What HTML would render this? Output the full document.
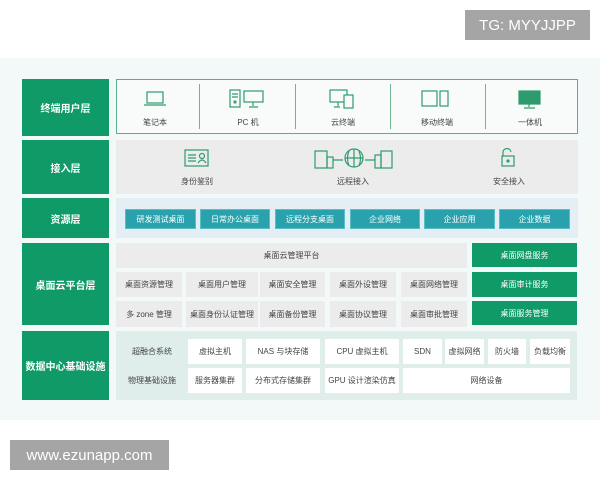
<!DOCTYPE html>
<html><head><meta charset="utf-8"><style>
*{margin:0;padding:0;box-sizing:border-box}
body{width:600px;height:480px;background:#fff;position:relative;overflow:hidden;font-family:"Liberation Sans","Noto Sans CJK SC",sans-serif;color:#444}
.a{position:absolute}
.lab{position:absolute;left:22px;width:87px;background:#0f9a68;color:#fff;font-size:10px;font-weight:bold;display:flex;align-items:center;justify-content:center}
.c{position:absolute;display:flex;align-items:center;justify-content:center;font-size:8px;color:#444}
.g{background:#ececec}
.gr{background:#0f9a68;color:#fff}
.t{background:#2aa2ad;color:#fff;border:1px solid #5bbec6}
.w{background:#fff}
.txt{position:absolute;font-size:8px;color:#444;text-align:center}
svg{position:absolute;fill:none;stroke:#2e9b6e;stroke-width:1.2}
</style></head><body>
<div class="a" style="left:465px;top:10px;width:125px;height:30px;background:#a5a5a5;color:#fff;font-size:15px;display:flex;align-items:center;justify-content:center">TG: MYYJJPP</div>
<div class="a" style="left:0;top:58px;width:600px;height:362px;background:#f3f8f8"></div>

<div class="lab" style="top:79px;height:57px">终端用户层</div>
<div class="a" style="left:116px;top:79px;width:462px;height:55px;border:1px solid #5aae8a;background:#f8fbfa"></div>
<div class="a" style="left:199px;top:84px;width:1px;height:45px;background:#6fb594"></div>
<div class="a" style="left:295px;top:84px;width:1px;height:45px;background:#6fb594"></div>
<div class="a" style="left:390px;top:84px;width:1px;height:45px;background:#6fb594"></div>
<div class="a" style="left:485px;top:84px;width:1px;height:45px;background:#6fb594"></div>
<svg style="left:143px;top:90px" width="24" height="18"><rect x="4" y="2" width="16" height="11"/><path d="M1 15h22"/></svg>
<div class="txt" style="left:125px;top:117px;width:60px">笔记本</div>
<svg style="left:229px;top:88px" width="40" height="22"><rect x="1" y="2" width="10" height="17"/><path d="M3 6h6M3 9h6"/><circle cx="6" cy="14" r="1"/><rect x="15" y="3" width="19" height="11"/><path d="M24 14v4M20 19h9"/></svg>
<div class="txt" style="left:218px;top:117px;width:60px">PC 机</div>
<svg style="left:329px;top:88px" width="30" height="22"><rect x="1" y="2" width="17" height="12"/><path d="M9 14v4M5 19h6"/><rect x="15" y="7" width="9" height="13" fill="#f8fbfa"/></svg>
<div class="txt" style="left:313px;top:117px;width:60px">云终端</div>
<svg style="left:420px;top:88px" width="30" height="22"><rect x="2" y="3" width="15" height="15"/><rect x="20" y="3" width="8" height="15"/></svg>
<div class="txt" style="left:407px;top:117px;width:60px">移动终端</div>
<svg style="left:517px;top:88px" width="26" height="22"><rect x="2" y="3" width="21" height="13" fill="#2e9b6e"/><path d="M12 16v3M7 20h11"/></svg>
<div class="txt" style="left:500px;top:117px;width:60px">一体机</div>

<div class="lab" style="top:140px;height:54px">接入层</div>
<div class="a g" style="left:116px;top:140px;width:462px;height:54px"></div>
<svg style="left:184px;top:149px" width="26" height="18"><rect x="1" y="1" width="23" height="16"/><path d="M4 6h8M4 9h8M4 12h8"/><circle cx="18" cy="7" r="2.5"/><path d="M14 14q4-6 8 0"/></svg>
<div class="txt" style="left:167px;top:176px;width:60px">身份鉴别</div>
<svg style="left:313px;top:148px" width="82" height="21"><rect x="2" y="3" width="12" height="17"/><rect x="14" y="9" width="6" height="11"/><path d="M20 12h10M52 12h10"/><circle cx="41" cy="10" r="9"/><path d="M32 10h18M41 1v18M36 3q-3 7 0 15M46 3q3 7 0 15"/><rect x="62" y="7" width="6" height="13"/><rect x="68" y="3" width="11" height="17"/></svg>
<div class="txt" style="left:323px;top:176px;width:60px">远程接入</div>
<svg style="left:500px;top:148px" width="16" height="20"><path d="M3 8V5a4 4 0 0 1 8-1"/><rect x="2" y="8" width="12" height="10"/><circle cx="8" cy="13" r="1" fill="#2e9b6e"/></svg>
<div class="txt" style="left:479px;top:176px;width:60px">安全接入</div>

<div class="lab" style="top:198px;height:40px">资源层</div>
<div class="a" style="left:116px;top:198px;width:462px;height:40px;background:#e3eff4"></div>
<div class="c t" style="left:125px;top:209px;width:71px;height:20px">研发测试桌面</div>
<div class="c t" style="left:200px;top:209px;width:70px;height:20px">日常办公桌面</div>
<div class="c t" style="left:275px;top:209px;width:70px;height:20px">远程分支桌面</div>
<div class="c t" style="left:350px;top:209px;width:70px;height:20px">企业网络</div>
<div class="c t" style="left:424px;top:209px;width:71px;height:20px">企业应用</div>
<div class="c t" style="left:499px;top:209px;width:71px;height:20px">企业数据</div>

<div class="lab" style="top:243px;height:82px">桌面云平台层</div>
<div class="c g" style="left:116px;top:243px;width:351px;height:25px">桌面云管理平台</div>
<div class="c gr" style="left:472px;top:243px;width:105px;height:24px">桌面网盘服务</div>
<div class="c gr" style="left:472px;top:272px;width:105px;height:25px">桌面审计服务</div>
<div class="c gr" style="left:472px;top:301px;width:105px;height:24px">桌面服务管理</div>
<div class="c g" style="left:116px;top:272px;width:66px;height:25px">桌面资源管理</div>
<div class="c g" style="left:186px;top:272px;width:72px;height:25px">桌面用户管理</div>
<div class="c g" style="left:260px;top:272px;width:65px;height:25px">桌面安全管理</div>
<div class="c g" style="left:330px;top:272px;width:66px;height:25px">桌面外设管理</div>
<div class="c g" style="left:401px;top:272px;width:66px;height:25px">桌面网络管理</div>
<div class="c g" style="left:116px;top:301px;width:66px;height:26px">多 zone 管理</div>
<div class="c g" style="left:186px;top:301px;width:72px;height:26px">桌面身份认证管理</div>
<div class="c g" style="left:260px;top:301px;width:65px;height:26px">桌面备份管理</div>
<div class="c g" style="left:330px;top:301px;width:66px;height:26px">桌面协议管理</div>
<div class="c g" style="left:401px;top:301px;width:66px;height:26px">桌面审批管理</div>

<div class="lab" style="top:331px;height:69px">数据中心基础设施</div>
<div class="a" style="left:116px;top:331px;width:461px;height:69px;background:#dfeeea"></div>
<div class="c" style="left:120px;top:339px;width:64px;height:25px">超融合系统</div>
<div class="c" style="left:120px;top:368px;width:64px;height:25px">物理基础设施</div>
<div class="c w" style="left:188px;top:339px;width:54px;height:25px">虚拟主机</div>
<div class="c w" style="left:246px;top:339px;width:74px;height:25px">NAS 与块存储</div>
<div class="c w" style="left:325px;top:339px;width:74px;height:25px">CPU 虚拟主机</div>
<div class="c w" style="left:403px;top:339px;width:39px;height:25px">SDN</div>
<div class="c w" style="left:445px;top:339px;width:39px;height:25px">虚拟网络</div>
<div class="c w" style="left:488px;top:339px;width:38px;height:25px">防火墙</div>
<div class="c w" style="left:530px;top:339px;width:40px;height:25px">负载均衡</div>
<div class="c w" style="left:188px;top:368px;width:54px;height:25px">服务器集群</div>
<div class="c w" style="left:246px;top:368px;width:74px;height:25px">分布式存储集群</div>
<div class="c w" style="left:325px;top:368px;width:74px;height:25px">GPU 设计渲染仿真</div>
<div class="c w" style="left:403px;top:368px;width:167px;height:25px">网络设备</div>

<div class="a" style="left:10px;top:440px;width:159px;height:30px;background:#a5a5a5;color:#fff;font-size:15px;display:flex;align-items:center;justify-content:center">www.ezunapp.com</div>
</body></html>
